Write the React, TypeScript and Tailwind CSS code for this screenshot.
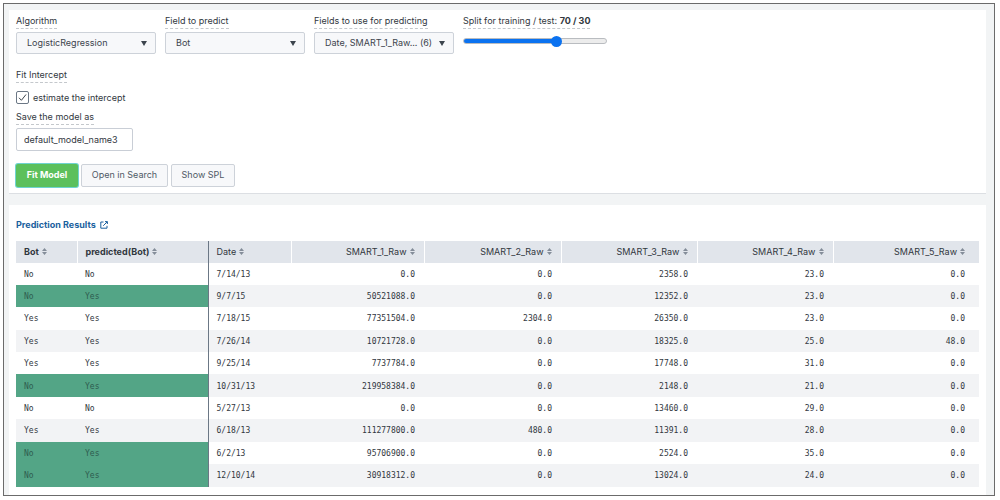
import { useState } from 'react';
import type { ReactNode } from 'react';

interface ResultRow {
  bot: string;
  predicted: string;
  date: string;
  smart: string[];
}

const rows: ResultRow[] = [
  { bot: 'No', predicted: 'No', date: '7/14/13', smart: ['0.0', '0.0', '2358.0', '23.0', '0.0'] },
  { bot: 'No', predicted: 'Yes', date: '9/7/15', smart: ['50521088.0', '0.0', '12352.0', '23.0', '0.0'] },
  { bot: 'Yes', predicted: 'Yes', date: '7/18/15', smart: ['77351504.0', '2304.0', '26350.0', '23.0', '0.0'] },
  { bot: 'Yes', predicted: 'Yes', date: '7/26/14', smart: ['10721728.0', '0.0', '18325.0', '25.0', '48.0'] },
  { bot: 'Yes', predicted: 'Yes', date: '9/25/14', smart: ['7737784.0', '0.0', '17748.0', '31.0', '0.0'] },
  { bot: 'No', predicted: 'Yes', date: '10/31/13', smart: ['219958384.0', '0.0', '2148.0', '21.0', '0.0'] },
  { bot: 'No', predicted: 'No', date: '5/27/13', smart: ['0.0', '0.0', '13460.0', '29.0', '0.0'] },
  { bot: 'Yes', predicted: 'Yes', date: '6/18/13', smart: ['111277800.0', '480.0', '11391.0', '28.0', '0.0'] },
  { bot: 'No', predicted: 'Yes', date: '6/2/13', smart: ['95706900.0', '0.0', '2524.0', '35.0', '0.0'] },
  { bot: 'No', predicted: 'Yes', date: '12/10/14', smart: ['30918312.0', '0.0', '13024.0', '24.0', '0.0'] },
];

const columns = [
  { name: 'Bot', width: 'w-[61px]' },
  { name: 'predicted(Bot)', width: 'w-[131px]' },
  { name: 'Date', width: 'w-[83px]' },
  { name: 'SMART_1_Raw', width: 'w-[133px]' },
  { name: 'SMART_2_Raw', width: 'w-[137px]' },
  { name: 'SMART_3_Raw', width: 'w-[136px]' },
  { name: 'SMART_4_Raw', width: 'w-[136px]' },
  { name: 'SMART_5_Raw', width: 'w-[146px]' },
];

function FieldLabel({ htmlFor, children }: { htmlFor: string; children: ReactNode }) {
  return (
    <label
      htmlFor={htmlFor}
      className="block w-fit whitespace-nowrap border-b border-dashed border-[#c4c8cc] leading-[14px]"
    >
      {children}
    </label>
  );
}

function SelectField({ id, label, options }: { id: string; label: string; options: string[] }) {
  return (
    <div className="w-[140px]">
      <FieldLabel htmlFor={id}>{label}</FieldLabel>
      <div className="relative mt-[3px]">
        <select
          id={id}
          className="block h-[22px] w-full appearance-none rounded-xs border border-[#cdd2d9] bg-[#f7f8fa] pl-[10px] pr-5 text-[#3c444d]"
        >
          {options.map((option) => (
            <option key={option}>{option}</option>
          ))}
        </select>
        <svg
          viewBox="0 0 6 5"
          className="pointer-events-none absolute right-[9px] top-[9px] h-[5px] w-[6px] fill-[#3c444d]"
        >
          <path d="M0 0h6L3 5z" />
        </svg>
      </div>
    </div>
  );
}

function SortIcon() {
  return (
    <svg viewBox="0 0 5 7" className="h-[7px] w-[5px] fill-[#848d99]">
      <path d="M2.5 0L5 3H0zM0 4h5L2.5 7z" />
    </svg>
  );
}

export default function App() {
  const [split, setSplit] = useState(70);
  const [estimate, setEstimate] = useState(true);
  const [modelName, setModelName] = useState('default_model_name3');

  const min = 10;
  const max = 100;
  const filled = ((split - min) / (max - min)) * 100;

  return (
    <div className="bg-white pb-[3px] pl-[3px] pr-[5px] pt-[3px] font-['Inter',sans-serif] text-[9px] text-[#31373e]">
      <div className="border border-[#6b6b6b] bg-[#f2f4f5] pl-[5px] pr-2 pt-[6px]">
        <section className="border-b border-[#dcdfe3] bg-white px-[7px] pb-[6px] pt-1">
          <div className="flex gap-[9px]">
            <SelectField id="algorithm" label="Algorithm" options={['LogisticRegression', 'SVM']} />
            <SelectField id="target" label="Field to predict" options={['Bot', 'Date']} />
            <SelectField
              id="features"
              label="Fields to use for predicting"
              options={['Date, SMART_1_Raw... (6)']}
            />
            <div className="w-[144px]">
              <FieldLabel htmlFor="split">
                Split for training / test:{' '}
                <b>
                  {split} / {100 - split}
                </b>
              </FieldLabel>
              <input
                id="split"
                type="range"
                min={min}
                max={max}
                value={split}
                onChange={(e) => setSplit(Number(e.target.value))}
                style={{
                  backgroundImage: `linear-gradient(to right, #0b72f0 ${filled}%, #ececec ${filled}%)`,
                }}
                className="mt-[9px] block h-[6px] w-full appearance-none rounded-full border border-[#b9bcc0] [&::-webkit-slider-thumb]:size-[11px] [&::-webkit-slider-thumb]:appearance-none [&::-webkit-slider-thumb]:rounded-full [&::-webkit-slider-thumb]:bg-[#0b72f0]"
              />
            </div>
          </div>

          <div className="mt-[14px]">
            <FieldLabel htmlFor="estimate">Fit Intercept</FieldLabel>
            <label className="mt-2 flex w-fit items-center gap-1">
              <span className="relative">
                <input
                  id="estimate"
                  type="checkbox"
                  checked={estimate}
                  onChange={(e) => setEstimate(e.target.checked)}
                  className="peer block size-[13px] appearance-none rounded-xs border border-[#6b7785] bg-white"
                />
                <svg
                  viewBox="0 0 13 13"
                  className="pointer-events-none absolute inset-0 hidden fill-none stroke-[#3c444d] peer-checked:block"
                >
                  <path d="M3 6.8l2.4 2.5L10 3.5" />
                </svg>
              </span>
              estimate the intercept
            </label>
          </div>

          <div className="mt-[5px]">
            <FieldLabel htmlFor="model-name">Save the model as</FieldLabel>
            <input
              id="model-name"
              type="text"
              value={modelName}
              onChange={(e) => setModelName(e.target.value)}
              className="mt-[3px] block h-[23px] w-[117px] rounded-xs border border-[#c9ced6] bg-white px-[7px]"
            />
          </div>

          <div className="mt-[13px] flex gap-[3px]">
            <button
              type="button"
              className="h-[23px] w-[62px] rounded-xs bg-[#5cc05c] font-bold text-white ring-1 ring-[#6fd3d0]"
            >
              Fit Model
            </button>
            <button
              type="button"
              className="h-[23px] w-[87px] rounded-xs border border-[#cdd2d9] bg-[#f7f8fa] text-[#4f5965]"
            >
              Open in Search
            </button>
            <button
              type="button"
              className="h-[23px] w-[64px] rounded-xs border border-[#cdd2d9] bg-[#f7f8fa] text-[#4f5965]"
            >
              Show SPL
            </button>
          </div>
        </section>

        <section className="mt-[11px] bg-white px-[7px] pb-2 pt-[13px]">
          <a href="#results" className="flex w-fit items-center gap-1 font-bold leading-[14px] text-[#1a5f9e]">
            Prediction Results
            <svg viewBox="0 0 8 8" className="size-2 fill-none stroke-[#1a5f9e]">
              <path d="M3.5 1H.8v6.2H7V4.8M5 .6h2.4V3M7.2.8L3.2 4.8" />
            </svg>
          </a>

          <table id="results" className="mt-[9px] h-[246px] w-full table-fixed border-collapse">
            <thead className="bg-[#e1e5eb]">
              <tr>
                {columns.map((column, i) => (
                  <th
                    key={column.name}
                    className={`${column.width} h-[22px] p-0 ${i < 2 ? 'font-bold' : 'font-normal'} ${
                      i === 1 ? 'border-r border-[#6b7785]' : 'border-r border-white last:border-r-0'
                    }`}
                  >
                    <button
                      type="button"
                      className={`flex w-full items-center gap-[3px] whitespace-nowrap pl-2 ${
                        i > 2 ? 'justify-end' : ''
                      } ${i === 7 ? 'pr-[14px]' : 'pr-[9px]'}`}
                    >
                      {column.name}
                      <SortIcon />
                    </button>
                  </th>
                ))}
              </tr>
            </thead>
            <tbody className="font-['DejaVu_Sans_Mono',monospace] text-[8px]">
              {rows.map((row) => {
                const wrong = row.bot !== row.predicted;
                return (
                  <tr key={row.date} className="even:bg-[#f2f3f5]">
                    <td className={`px-2 pb-0 pt-[2px] ${wrong ? 'bg-[#53a586] text-[#2f5c50]' : ''}`}>
                      {row.bot}
                    </td>
                    <td
                      className={`border-r border-[#6b7785] px-2 pb-0 pt-[2px] ${
                        wrong ? 'bg-[#53a586] text-[#2f5c50]' : ''
                      }`}
                    >
                      {row.predicted}
                    </td>
                    <td className="px-2 pb-0 pt-[2px]">{row.date}</td>
                    {row.smart.map((value, i) => (
                      <td key={i} className="pb-0 pl-2 pr-[9px] pt-[2px] text-right last:pr-[14px]">
                        {value}
                      </td>
                    ))}
                  </tr>
                );
              })}
            </tbody>
          </table>
        </section>
      </div>
    </div>
  );
}
